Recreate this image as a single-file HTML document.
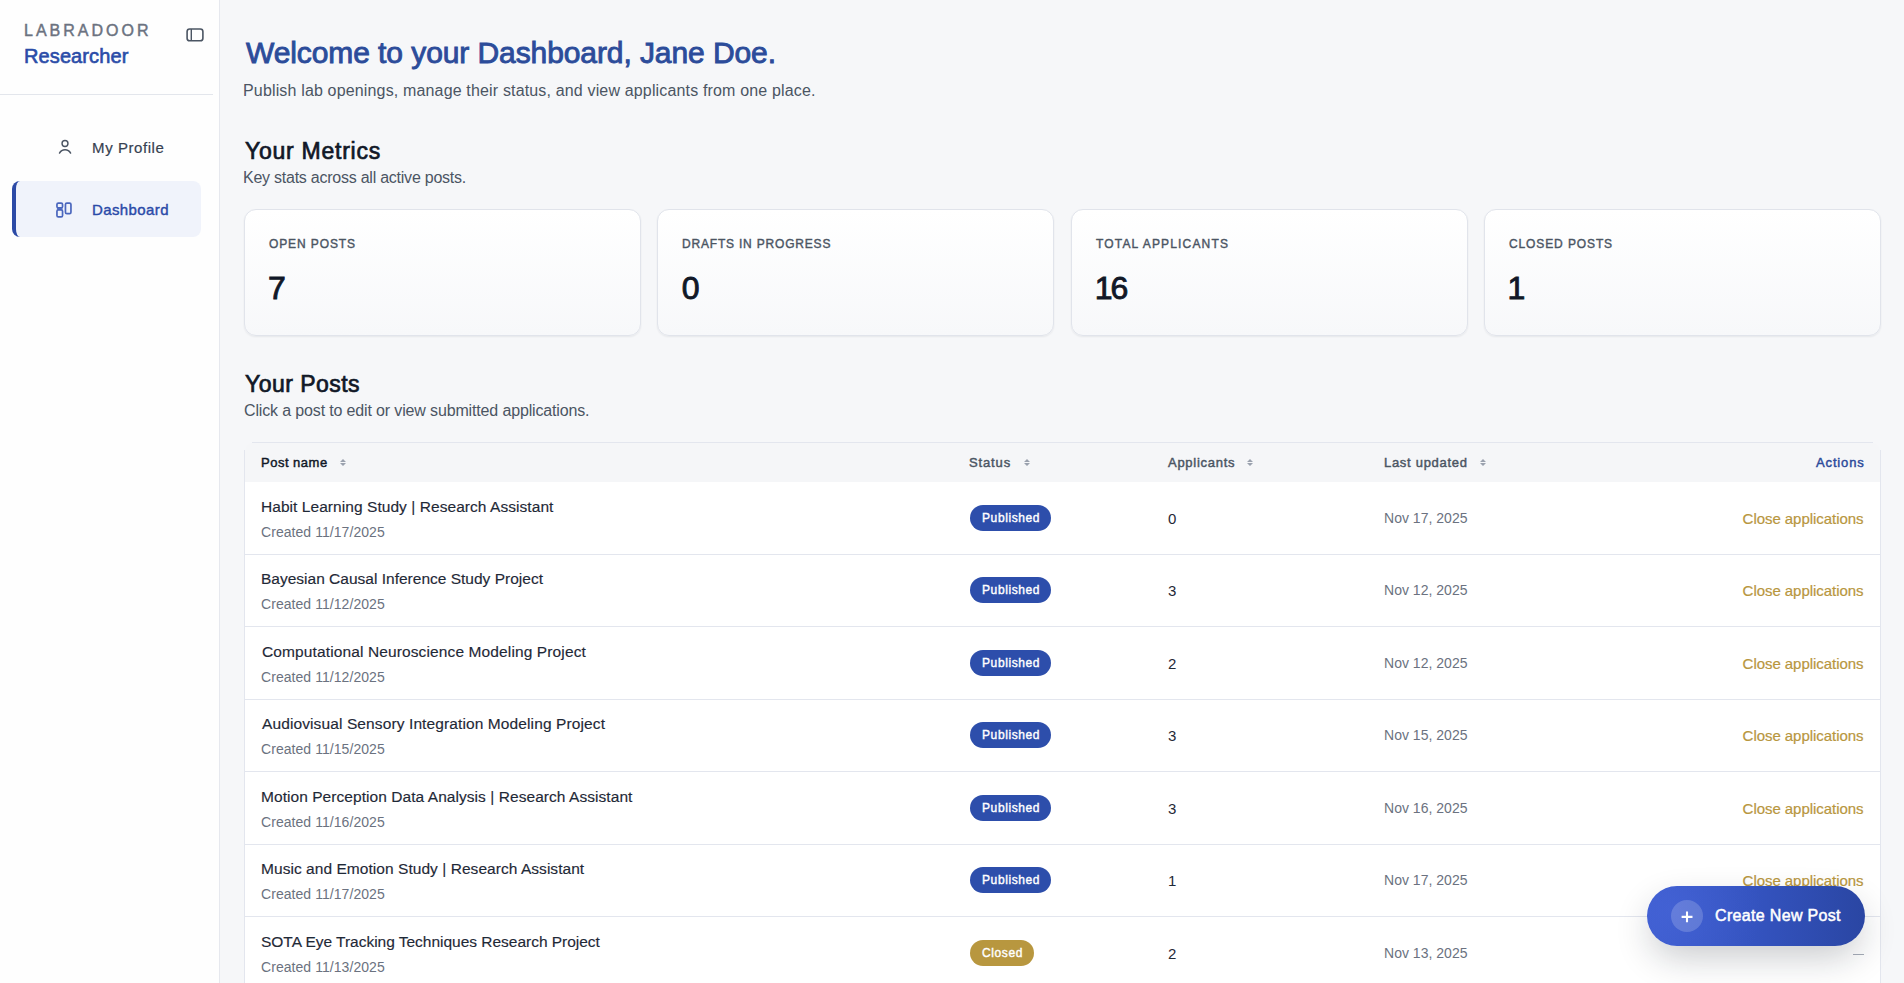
<!DOCTYPE html>
<html><head><meta charset="utf-8">
<style>
*{box-sizing:border-box;margin:0;padding:0}
html,body{width:1904px;height:983px;overflow:hidden}
body{font-family:"Liberation Sans",sans-serif;background:#f6f7f9;position:relative;color:#111827}
.tx{position:absolute;white-space:nowrap}
#side{position:absolute;left:0;top:0;width:220px;height:983px;background:#fefefe;border-right:1px solid #e6e8ee}
#divider{position:absolute;left:0;top:94px;width:213px;height:1px;background:#e3e6ec}
#dashbox{position:absolute;left:12px;top:181px;width:189px;height:56px;background:#f0f3fb;border-radius:8px;border-left:4px solid #2c4aa6}
.card{position:absolute;top:209px;width:397px;height:127px;border-radius:12px;border:1px solid #e1e4eb;background:linear-gradient(#ffffff,#f7f8fa);box-shadow:0 1px 2px rgba(16,24,40,0.07)}
#thead{position:absolute;left:245px;top:443px;width:1635px;height:39px;background:#f5f6f8;border-radius:8px 8px 0 0}
.hr{position:absolute;left:245px;width:1635px;height:1px;background:#e3e6ee}
#lborder{position:absolute;left:244px;top:450px;width:1px;height:540px;background:#e3e6ee}
#rborder{position:absolute;left:1880px;top:450px;width:1px;height:540px;background:#e3e6ee}
#tbody{position:absolute;left:245px;top:482px;width:1635px;height:510px;background:#fff}
.sort{position:absolute;top:458.5px}
.badge{position:absolute;left:970px;height:26px;line-height:26px;padding:0 11px 0 12px;border-radius:13px;color:#fff;font-size:12px;font-weight:normal;-webkit-text-stroke:0.4px #fff;letter-spacing:0.6px;white-space:nowrap}
.pub{background:#2d4eab}
.cls{background:#b8973f}
.dashact{position:absolute;left:1852.5px;width:11px;height:1.3px;background:#a6acb8}
#fab{position:absolute;left:1647px;top:886px;width:218px;height:60px;border-radius:30px;background:radial-gradient(circle at 12% 40%,rgba(80,110,230,0.35),rgba(80,110,230,0) 45%),linear-gradient(90deg,#3d5ccd,#3453bf 50%,#2a46a3);box-shadow:0 14px 36px -4px rgba(17,24,39,0.24);overflow:hidden;z-index:5}
#fab span{position:absolute;left:68px;top:22.4px;font-size:16px;line-height:16px;font-weight:normal;-webkit-text-stroke:0.5px #fff;letter-spacing:0.33px;color:#fff;white-space:nowrap}
#plus{position:absolute;left:24px;top:14px;width:32px;height:32px;border-radius:16px;background:rgba(255,255,255,0.18)}
#plus svg{position:absolute;left:0;top:0}

</style></head><body>
<div id="side">
  <svg style="position:absolute;left:183px;top:25px" width="24" height="20" viewBox="0 0 24 20"><rect x="4.1" y="4" width="15.8" height="11.8" rx="2.6" fill="none" stroke="#4b5563" stroke-width="1.6"/><line x1="8.3" y1="4" x2="8.3" y2="15.8" stroke="#4b5563" stroke-width="1.4"/></svg>
  <div id="divider"></div>
  <svg style="position:absolute;left:50px;top:132px" width="30" height="30" viewBox="0 0 30 30" fill="none" stroke="#4b5563" stroke-width="1.45" stroke-linecap="round"><circle cx="15" cy="11.5" r="2.95"/><path d="M9.5 21.1A6.3 6.3 0 0 1 20.6 21.1"/></svg>
  <div id="dashbox"></div>
  <svg style="position:absolute;left:54px;top:200px" width="20" height="20" viewBox="0 0 20 20" fill="none" stroke="#4a66bd" stroke-width="1.7"><rect x="2.95" y="3.05" width="5.6" height="4.9" rx="1.4"/><rect x="2.95" y="9.95" width="5.6" height="6.9" rx="1.4"/><rect x="11.45" y="3.05" width="5.5" height="10.6" rx="1.4"/><path d="M3 8.9h5.5" stroke-width="1.4"/></svg>
</div>
<div class="card" style="left:244px"></div>
<div class="card" style="left:657px"></div>
<div class="card" style="left:1071px"></div>
<div class="card" style="left:1484px"></div>
<div id="thead"></div>
<div class="hr" style="top:442px;left:252px;width:1621px"></div>
<div id="tbody"></div>
<div id="lborder"></div><div id="rborder"></div>
<svg class="sort" style="left:340px" width="6" height="7" viewBox="0 0 6 7"><path d="M3 0L6 3H0Z M0 4H6L3 7Z" fill="#9aa1ae"/></svg>
<svg class="sort" style="left:1024px" width="6" height="7" viewBox="0 0 6 7"><path d="M3 0L6 3H0Z M0 4H6L3 7Z" fill="#9aa1ae"/></svg>
<svg class="sort" style="left:1246.5px" width="6" height="7" viewBox="0 0 6 7"><path d="M3 0L6 3H0Z M0 4H6L3 7Z" fill="#9aa1ae"/></svg>
<svg class="sort" style="left:1479.5px" width="6" height="7" viewBox="0 0 6 7"><path d="M3 0L6 3H0Z M0 4H6L3 7Z" fill="#9aa1ae"/></svg>
<div class="hr" style="top:554px"></div><div class="hr" style="top:626px"></div><div class="hr" style="top:699px"></div><div class="hr" style="top:771px"></div><div class="hr" style="top:844px"></div><div class="hr" style="top:916px"></div>
<div class="badge pub" style="top:505.0px">Published</div><div class="badge pub" style="top:577.0px">Published</div><div class="badge pub" style="top:650.0px">Published</div><div class="badge pub" style="top:722.0px">Published</div><div class="badge pub" style="top:795.0px">Published</div><div class="badge pub" style="top:867.0px">Published</div><div class="badge cls" style="top:940.0px">Closed</div><div class="dashact" style="top:954.0px"></div>
<div id="fab"><div id="plus"><svg width="32" height="32" viewBox="0 0 32 32"><path d="M16 11.4v10.9M10.6 16.9h10.9" stroke="#fff" stroke-width="2.1" stroke-linecap="butt"/></svg></div><span>Create New Post</span></div>

<div class="tx" id="brand" style="top:22.86px;font-size:16px;line-height:16px;font-weight:normal;-webkit-text-stroke:0.45px #6b7280;color:#6b7280;letter-spacing:2.997px;left:24.00px;">LABRADOOR</div><div class="tx" id="role" style="top:46.07px;font-size:20px;line-height:20px;font-weight:normal;-webkit-text-stroke:0.6px #2a4ca8;color:#2a4ca8;letter-spacing:0.103px;left:24.00px;">Researcher</div><div class="tx" id="prof" style="top:139.70px;font-size:15px;line-height:15px;font-weight:normal;-webkit-text-stroke:0.2px #374151;color:#374151;letter-spacing:0.557px;left:92.10px;">My Profile</div><div class="tx" id="dash" style="top:201.60px;font-size:15px;line-height:15px;font-weight:normal;-webkit-text-stroke:0.4px #2a4aa8;color:#2a4aa8;letter-spacing:0.400px;left:92.00px;">Dashboard</div><div class="tx" id="h1" style="top:37.91px;font-size:30px;line-height:30px;font-weight:normal;-webkit-text-stroke:0.9px #2c4c9a;color:#2c4c9a;letter-spacing:-0.087px;left:246.00px;">Welcome to your Dashboard, Jane Doe.</div><div class="tx" id="sub" style="top:83.06px;font-size:16px;line-height:16px;font-weight:normal;color:#4b5563;letter-spacing:0.157px;left:243.00px;">Publish lab openings, manage their status, and view applicants from one place.</div><div class="tx" id="h2a" style="top:140.33px;font-size:23px;line-height:23px;font-weight:normal;-webkit-text-stroke:0.7px #111827;color:#111827;letter-spacing:0.746px;left:245.00px;">Your Metrics</div><div class="tx" id="ks" style="top:170.16px;font-size:16px;line-height:16px;font-weight:normal;color:#4b5563;letter-spacing:-0.242px;left:243.00px;">Key stats across all active posts.</div><div class="tx" id="h2b" style="top:373.33px;font-size:23px;line-height:23px;font-weight:normal;-webkit-text-stroke:0.7px #111827;color:#111827;letter-spacing:0.469px;left:245.00px;">Your Posts</div><div class="tx" id="cl" style="top:403.36px;font-size:16px;line-height:16px;font-weight:normal;color:#4b5563;letter-spacing:-0.147px;left:244.00px;">Click a post to edit or view submitted applications.</div><div class="tx" id="cl0" style="top:238.04px;font-size:12px;line-height:12px;font-weight:normal;-webkit-text-stroke:0.4px #4b5563;color:#4b5563;letter-spacing:0.889px;left:269.00px;">OPEN POSTS</div><div class="tx" id="cn0" style="top:272.21px;font-size:32px;line-height:32px;font-weight:normal;-webkit-text-stroke:0.9px #111827;color:#111827;letter-spacing:0.000px;left:268.00px;">7</div><div class="tx" id="cl1" style="top:238.04px;font-size:12px;line-height:12px;font-weight:normal;-webkit-text-stroke:0.4px #4b5563;color:#4b5563;letter-spacing:0.806px;left:682.00px;">DRAFTS IN PROGRESS</div><div class="tx" id="cn1" style="top:272.21px;font-size:32px;line-height:32px;font-weight:normal;-webkit-text-stroke:0.9px #111827;color:#111827;letter-spacing:0.000px;left:681.70px;">0</div><div class="tx" id="cl2" style="top:238.04px;font-size:12px;line-height:12px;font-weight:normal;-webkit-text-stroke:0.4px #4b5563;color:#4b5563;letter-spacing:1.164px;left:1096.00px;">TOTAL APPLICANTS</div><div class="tx" id="cn2" style="top:272.21px;font-size:32px;line-height:32px;font-weight:normal;-webkit-text-stroke:0.9px #111827;color:#111827;letter-spacing:-2.000px;left:1094.70px;">16</div><div class="tx" id="cl3" style="top:238.04px;font-size:12px;line-height:12px;font-weight:normal;-webkit-text-stroke:0.4px #4b5563;color:#4b5563;letter-spacing:0.888px;left:1509.00px;">CLOSED POSTS</div><div class="tx" id="cn3" style="top:272.21px;font-size:32px;line-height:32px;font-weight:normal;-webkit-text-stroke:0.9px #111827;color:#111827;letter-spacing:0.000px;left:1507.60px;">1</div><div class="tx" id="ph" style="top:455.90px;font-size:13px;line-height:13px;font-weight:normal;-webkit-text-stroke:0.45px #111827;color:#111827;letter-spacing:0.497px;left:261.00px;">Post name</div><div class="tx" id="ps" style="top:455.90px;font-size:13px;line-height:13px;font-weight:normal;-webkit-text-stroke:0.45px #4b5563;color:#4b5563;letter-spacing:0.860px;left:969.00px;">Status</div><div class="tx" id="pa" style="top:455.90px;font-size:13px;line-height:13px;font-weight:normal;-webkit-text-stroke:0.45px #4b5563;color:#4b5563;letter-spacing:0.722px;left:1168.00px;">Applicants</div><div class="tx" id="pl" style="top:455.90px;font-size:13px;line-height:13px;font-weight:normal;-webkit-text-stroke:0.45px #4b5563;color:#4b5563;letter-spacing:0.702px;left:1384.00px;">Last updated</div><div class="tx" id="pact" style="top:455.90px;font-size:13px;line-height:13px;font-weight:normal;-webkit-text-stroke:0.45px #2c4a9a;color:#2c4a9a;letter-spacing:0.862px;right:39.34px;">Actions</div><div class="tx" id="rt0" style="top:498.88px;font-size:15.5px;line-height:15.5px;font-weight:normal;-webkit-text-stroke:0.15px #1f2937;color:#1f2937;letter-spacing:0.058px;left:261.00px;">Habit Learning Study | Research Assistant</div><div class="tx" id="rc0" style="top:524.95px;font-size:14px;line-height:14px;font-weight:normal;color:#6b7280;letter-spacing:0.058px;left:261.00px;">Created 11/17/2025</div><div class="tx" id="rn0" style="top:510.70px;font-size:15px;line-height:15px;font-weight:normal;color:#1f2937;letter-spacing:0.000px;left:1168.00px;">0</div><div class="tx" id="rd0" style="top:511.45px;font-size:14px;line-height:14px;font-weight:normal;color:#6b7280;letter-spacing:0.018px;left:1384.00px;">Nov 17, 2025</div><div class="tx" id="ra0" style="top:510.90px;font-size:15px;line-height:15px;font-weight:normal;-webkit-text-stroke:0.2px #b8963e;color:#b8963e;letter-spacing:-0.050px;right:40.55px;">Close applications</div><div class="tx" id="rt1" style="top:570.88px;font-size:15.5px;line-height:15.5px;font-weight:normal;-webkit-text-stroke:0.15px #1f2937;color:#1f2937;letter-spacing:0.006px;left:261.00px;">Bayesian Causal Inference Study Project</div><div class="tx" id="rc1" style="top:596.95px;font-size:14px;line-height:14px;font-weight:normal;color:#6b7280;letter-spacing:0.058px;left:261.00px;">Created 11/12/2025</div><div class="tx" id="rn1" style="top:582.70px;font-size:15px;line-height:15px;font-weight:normal;color:#1f2937;letter-spacing:0.000px;left:1168.00px;">3</div><div class="tx" id="rd1" style="top:583.45px;font-size:14px;line-height:14px;font-weight:normal;color:#6b7280;letter-spacing:0.018px;left:1384.00px;">Nov 12, 2025</div><div class="tx" id="ra1" style="top:582.90px;font-size:15px;line-height:15px;font-weight:normal;-webkit-text-stroke:0.2px #b8963e;color:#b8963e;letter-spacing:-0.050px;right:40.55px;">Close applications</div><div class="tx" id="rt2" style="top:643.88px;font-size:15.5px;line-height:15.5px;font-weight:normal;-webkit-text-stroke:0.15px #1f2937;color:#1f2937;letter-spacing:0.120px;left:262.00px;">Computational Neuroscience Modeling Project</div><div class="tx" id="rc2" style="top:669.95px;font-size:14px;line-height:14px;font-weight:normal;color:#6b7280;letter-spacing:0.058px;left:261.00px;">Created 11/12/2025</div><div class="tx" id="rn2" style="top:655.70px;font-size:15px;line-height:15px;font-weight:normal;color:#1f2937;letter-spacing:0.000px;left:1168.00px;">2</div><div class="tx" id="rd2" style="top:656.45px;font-size:14px;line-height:14px;font-weight:normal;color:#6b7280;letter-spacing:0.018px;left:1384.00px;">Nov 12, 2025</div><div class="tx" id="ra2" style="top:655.90px;font-size:15px;line-height:15px;font-weight:normal;-webkit-text-stroke:0.2px #b8963e;color:#b8963e;letter-spacing:-0.050px;right:40.55px;">Close applications</div><div class="tx" id="rt3" style="top:715.88px;font-size:15.5px;line-height:15.5px;font-weight:normal;-webkit-text-stroke:0.15px #1f2937;color:#1f2937;letter-spacing:0.111px;left:262.00px;">Audiovisual Sensory Integration Modeling Project</div><div class="tx" id="rc3" style="top:741.95px;font-size:14px;line-height:14px;font-weight:normal;color:#6b7280;letter-spacing:0.058px;left:261.00px;">Created 11/15/2025</div><div class="tx" id="rn3" style="top:727.70px;font-size:15px;line-height:15px;font-weight:normal;color:#1f2937;letter-spacing:0.000px;left:1168.00px;">3</div><div class="tx" id="rd3" style="top:728.45px;font-size:14px;line-height:14px;font-weight:normal;color:#6b7280;letter-spacing:0.018px;left:1384.00px;">Nov 15, 2025</div><div class="tx" id="ra3" style="top:727.90px;font-size:15px;line-height:15px;font-weight:normal;-webkit-text-stroke:0.2px #b8963e;color:#b8963e;letter-spacing:-0.050px;right:40.55px;">Close applications</div><div class="tx" id="rt4" style="top:788.88px;font-size:15.5px;line-height:15.5px;font-weight:normal;-webkit-text-stroke:0.15px #1f2937;color:#1f2937;letter-spacing:0.057px;left:261.00px;">Motion Perception Data Analysis | Research Assistant</div><div class="tx" id="rc4" style="top:814.95px;font-size:14px;line-height:14px;font-weight:normal;color:#6b7280;letter-spacing:0.058px;left:261.00px;">Created 11/16/2025</div><div class="tx" id="rn4" style="top:800.70px;font-size:15px;line-height:15px;font-weight:normal;color:#1f2937;letter-spacing:0.000px;left:1168.00px;">3</div><div class="tx" id="rd4" style="top:801.45px;font-size:14px;line-height:14px;font-weight:normal;color:#6b7280;letter-spacing:0.018px;left:1384.00px;">Nov 16, 2025</div><div class="tx" id="ra4" style="top:800.90px;font-size:15px;line-height:15px;font-weight:normal;-webkit-text-stroke:0.2px #b8963e;color:#b8963e;letter-spacing:-0.050px;right:40.55px;">Close applications</div><div class="tx" id="rt5" style="top:860.88px;font-size:15.5px;line-height:15.5px;font-weight:normal;-webkit-text-stroke:0.15px #1f2937;color:#1f2937;letter-spacing:0.049px;left:261.00px;">Music and Emotion Study | Research Assistant</div><div class="tx" id="rc5" style="top:886.95px;font-size:14px;line-height:14px;font-weight:normal;color:#6b7280;letter-spacing:0.058px;left:261.00px;">Created 11/17/2025</div><div class="tx" id="rn5" style="top:872.70px;font-size:15px;line-height:15px;font-weight:normal;color:#1f2937;letter-spacing:0.000px;left:1168.00px;">1</div><div class="tx" id="rd5" style="top:873.45px;font-size:14px;line-height:14px;font-weight:normal;color:#6b7280;letter-spacing:0.018px;left:1384.00px;">Nov 17, 2025</div><div class="tx" id="ra5" style="top:872.90px;font-size:15px;line-height:15px;font-weight:normal;-webkit-text-stroke:0.2px #b8963e;color:#b8963e;letter-spacing:-0.050px;right:40.55px;">Close applications</div><div class="tx" id="rt6" style="top:933.88px;font-size:15.5px;line-height:15.5px;font-weight:normal;-webkit-text-stroke:0.15px #1f2937;color:#1f2937;letter-spacing:-0.019px;left:261.00px;">SOTA Eye Tracking Techniques Research Project</div><div class="tx" id="rc6" style="top:959.95px;font-size:14px;line-height:14px;font-weight:normal;color:#6b7280;letter-spacing:0.058px;left:261.00px;">Created 11/13/2025</div><div class="tx" id="rn6" style="top:945.70px;font-size:15px;line-height:15px;font-weight:normal;color:#1f2937;letter-spacing:0.000px;left:1168.00px;">2</div><div class="tx" id="rd6" style="top:946.45px;font-size:14px;line-height:14px;font-weight:normal;color:#6b7280;letter-spacing:0.018px;left:1384.00px;">Nov 13, 2025</div>
</body></html>
